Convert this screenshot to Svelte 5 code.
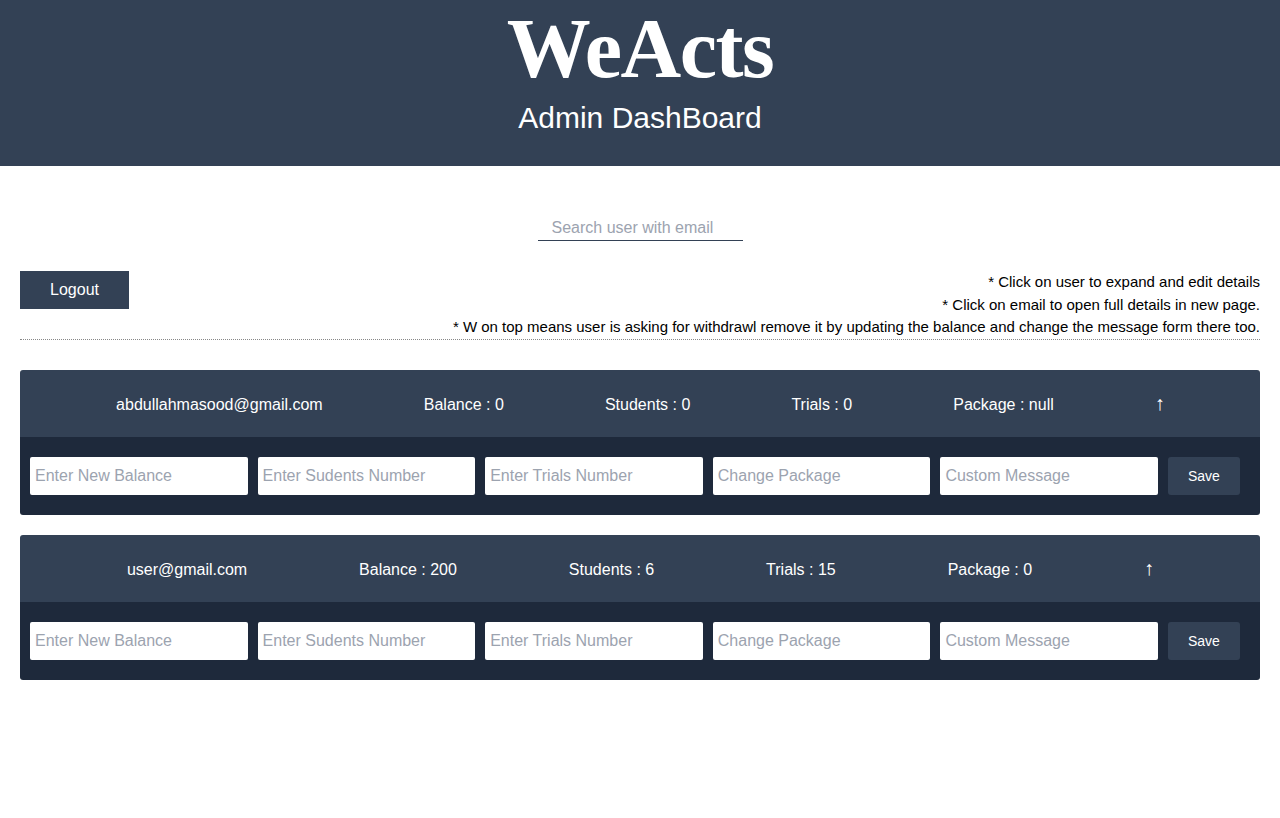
<script>
	const users = [
		{ email: 'abdullahmasood@gmail.com', balance: 0, students: 0, trials: 0, pkg: 'null' },
		{ email: 'user@gmail.com', balance: 200, students: 6, trials: 15, pkg: 0 }
	];
	const fields = [
		'Enter New Balance',
		'Enter Sudents Number',
		'Enter Trials Number',
		'Change Package',
		'Custom Message'
	];
</script>

<header class="top">
	<div class="logo">WeActs</div>
	<h1>Admin DashBoard</h1>
</header>

<main>
	<div class="search">
		<input type="text" placeholder="Search user with email" />
	</div>

	<div class="tools">
		<button class="logout">Logout</button>
		<div class="notes">
			<p>* Click on user to expand and edit details</p>
			<p>* Click on email to open full details in new page.</p>
			<p>* W on top means user is asking for withdrawl remove it by updating the balance and change the message form there too.</p>
		</div>
	</div>

	{#each users as user}
		<section class="user">
			<div class="summary">
				<div class="cells">
					<span>{user.email}</span>
					<span>Balance : {user.balance}</span>
					<span>Students : {user.students}</span>
					<span>Trials : {user.trials}</span>
					<span>Package : {user.pkg}</span>
					<span class="arrow">↑</span>
				</div>
			</div>
			<form class="edit">
				{#each fields as field}
					<input type="text" placeholder={field} />
				{/each}
				<button type="button">Save</button>
			</form>
		</section>
	{/each}
</main>

<style>
	:global(body) {
		margin: 0;
		background: #fff;
		font-family: 'Liberation Sans', Arial, sans-serif;
		color: #000;
	}
	.top {
		height: 166px;
		box-sizing: border-box;
		padding-top: 14px;
		background: #334155;
		color: #fff;
		text-align: center;
	}
	.logo {
		height: 70px;
		font-family: 'Liberation Serif', serif;
		font-weight: 700;
		font-size: 84px;
		line-height: 70px;
		letter-spacing: -1.5px;
	}
	h1 {
		margin: 16px 0 0;
		font-size: 30px;
		font-weight: 400;
		line-height: 36px;
	}
	main {
		padding: 0 20px;
	}
	.search {
		display: flex;
		justify-content: center;
		padding-top: 50px;
	}
	.search input {
		width: 205px;
		height: 25px;
		box-sizing: border-box;
		padding: 0 14px;
		border: 0;
		border-bottom: 1px solid #334155;
		outline: none;
		font: 16px 'Liberation Sans', Arial, sans-serif;
	}
	input::placeholder {
		color: #9ca3af;
		opacity: 1;
	}
	.tools {
		display: flex;
		justify-content: space-between;
		align-items: flex-start;
		margin-top: 30px;
		border-bottom: 1px dotted #888;
		margin-bottom: 30px;
	}
	.logout {
		width: 109px;
		height: 38px;
		border: 0;
		background: #334155;
		color: #fff;
		font: 16px 'Liberation Sans', Arial, sans-serif;
	}
	.notes {
		text-align: right;
		font-size: 15px;
		line-height: 22.5px;
	}
	.notes p {
		margin: 0;
	}
	.user {
		margin-bottom: 20px;
		border-radius: 3px;
		overflow: hidden;
	}
	.summary {
		height: 67px;
		box-sizing: border-box;
		padding-top: 4px;
		background: #334155;
		color: #fff;
		font-size: 16px;
	}
	.cells {
		display: flex;
		justify-content: space-evenly;
		align-items: center;
		height: 100%;
		margin: 0 -5px;
	}
	.arrow {
		font-size: 20px;
		margin-right: -1px;
		color: #fff;
		transform: translateY(-2px);
	}
	.edit {
		display: flex;
		gap: 10px;
		padding: 20px 20px 20px 10px;
		background: #1e293b;
	}
	.edit input {
		flex: 1;
		min-width: 0;
		height: 38px;
		box-sizing: border-box;
		padding: 0 5px;
		border: 0;
		border-radius: 2px;
		background: #fff;
		font: 16px 'Liberation Sans', Arial, sans-serif;
	}
	.edit button {
		flex: none;
		width: 72px;
		height: 38px;
		border: 0;
		border-radius: 3px;
		background: #334155;
		color: #fff;
		font: 14px 'Liberation Sans', Arial, sans-serif;
	}
</style>
